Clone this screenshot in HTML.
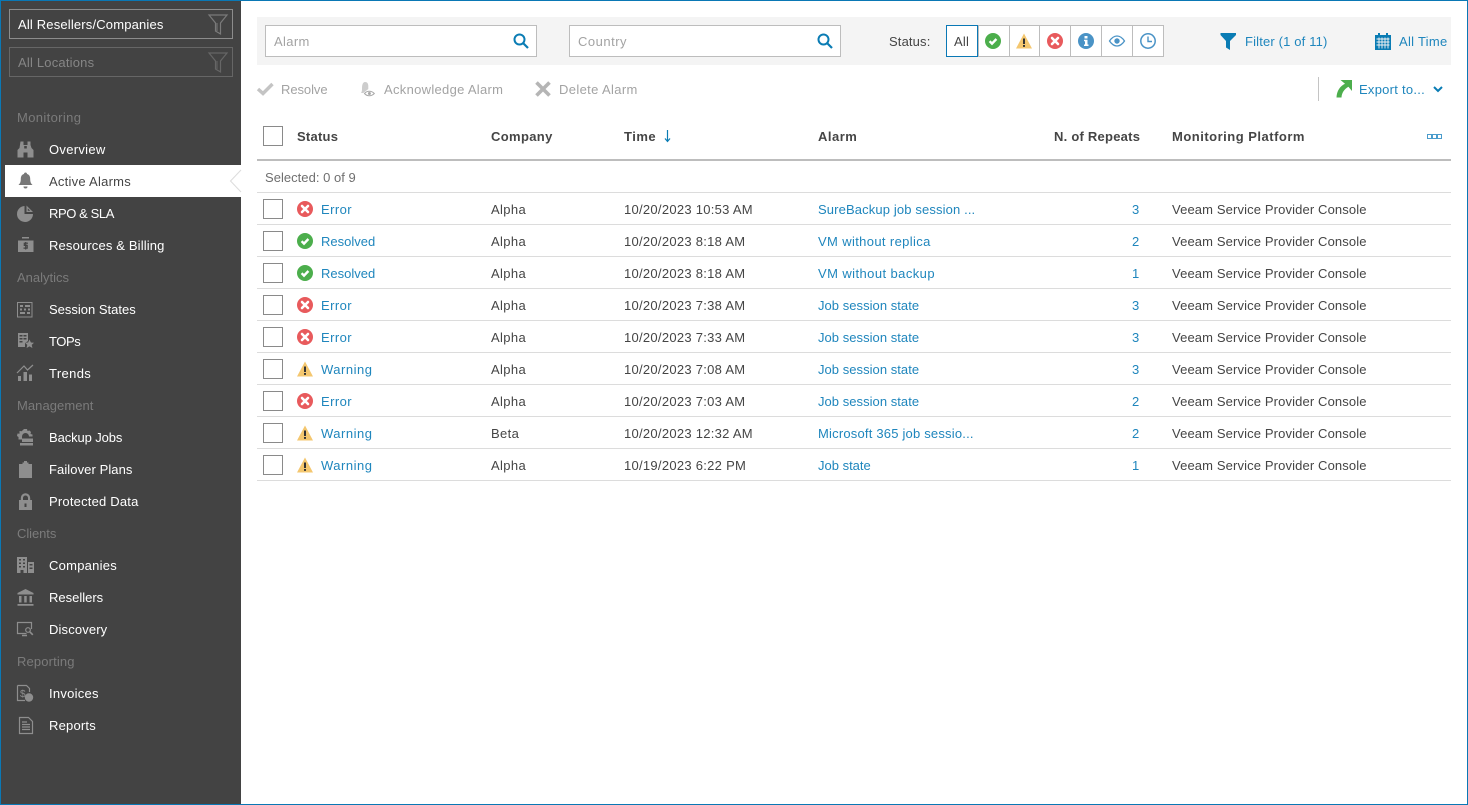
<!DOCTYPE html>
<html lang="en"><head><meta charset="utf-8"><title>Active Alarms</title>
<style>
html,body{margin:0;padding:0}
body{width:1468px;height:805px;position:relative;overflow:hidden;background:#fff;font:13px/16px "Liberation Sans",sans-serif;color:#454545;letter-spacing:.36px}
.t{position:absolute;white-space:nowrap;margin-top:1px}
.b{position:absolute;box-sizing:border-box}
svg{position:absolute;overflow:visible}
.n{color:#fff;left:49px}
.h{color:#7b7b7b;left:17px}
.l{color:#1f86bd}
.th{font-weight:bold;color:#454545;letter-spacing:.5px}
.g{color:#a3a3a3}
.cb{position:absolute;left:263px;width:20px;height:20px;box-sizing:border-box;border:1px solid #8a8a8a;background:#fff}
.ln{position:absolute;left:257px;width:1194px;height:1px;background:#dcdcdc}
.st{position:absolute;top:25px;width:32px;height:32px;box-sizing:border-box;border:1px solid #bdbdbd;background:#fff}
.v{left:1172px;letter-spacing:.13px}
.d{left:624px;letter-spacing:.28px}
.c{left:491px}
.a{left:818px}
.k{left:321px}
.r{left:1132px}
.err{letter-spacing:.42px}
.res{letter-spacing:0}
.war{letter-spacing:.5px}
.job{letter-spacing:.04px}
</style></head><body>
<svg width="0" height="0" style="position:absolute">
<defs>
<g id="err"><circle cx="8" cy="8" r="8" fill="#e85a5c"/><path d="M5 5l6 6M11 5l-6 6" stroke="#fff" stroke-width="2.6" stroke-linecap="round"/></g>
<g id="ok"><circle cx="8" cy="8" r="8" fill="#4cae4c"/><path d="M4.600 8.200l2.400 2.400 4.400-4.600" stroke="#fff" stroke-width="2.400" fill="none"/></g>
<g id="warn"><path d="M8 .5L16 15.500H0z" fill="#f4c76f"/><path d="M7 5.500h2v5.500H7zM7 12h2v1.900H7z" fill="#333"/></g>
<g id="fun"><path d="M1 1h18l-6.500 8v11l-5-3V9z" fill="none" stroke="currentColor" stroke-width="1.200"/><path d="M9 9v8" stroke="currentColor" stroke-width="1"/></g>
<g id="mag"><circle cx="6.500" cy="6.500" r="5" fill="none" stroke="#0a7cb4" stroke-width="2"/><path d="M10 10l5 5" stroke="#0a7cb4" stroke-width="2.200"/></g>
</defs>
</svg>

<!-- frame -->
<div class="b" style="left:0;top:0;width:1468px;height:805px;border:1px solid #0a78b5;z-index:9;pointer-events:none"></div>
<!-- sidebar -->
<div class="b" style="left:1px;top:1px;width:240px;height:803px;background:#434343"></div>
<div class="b" style="left:9px;top:9px;width:224px;height:30px;border:1px solid #8c8c8c"></div>
<div class="t" style="left:18px;top:16px;color:#fff;letter-spacing:.17px">All Resellers/Companies</div>
<svg style="left:208px;top:14px;color:#7a7a7a" width="20" height="20"><use href="#fun"/></svg>
<div class="b" style="left:9px;top:47px;width:224px;height:30px;border:1px solid #666"></div>
<div class="t" style="left:18px;top:54px;color:#868686;letter-spacing:.2px">All Locations</div>
<svg style="left:208px;top:52px;color:#666" width="20" height="20"><use href="#fun"/></svg>

<div class="b" style="left:5px;top:165px;width:236px;height:32px;background:#fff"></div>
<svg style="left:229px;top:169px" width="12" height="24"><path d="M12 1L1.500 12 12 23" fill="#fff" stroke="#dcdcdc" stroke-width="1"/></svg>

<div class="t h" style="top:109px">Monitoring</div>
<div class="t n" style="top:141px;letter-spacing:.3px">Overview</div>
<div class="t" style="left:49px;top:173px;color:#454545;letter-spacing:.25px">Active Alarms</div>
<div class="t n" style="top:205px;letter-spacing:-.4px">RPO &amp; SLA</div>
<div class="t n" style="top:237px;letter-spacing:.15px">Resources &amp; Billing</div>
<div class="t h" style="top:269px;letter-spacing:0">Analytics</div>
<div class="t n" style="top:301px;letter-spacing:0">Session States</div>
<div class="t n" style="top:333px;letter-spacing:-.4px">TOPs</div>
<div class="t n" style="top:365px">Trends</div>
<div class="t h" style="top:397px;letter-spacing:.06px">Management</div>
<div class="t n" style="top:429px;letter-spacing:-.1px">Backup Jobs</div>
<div class="t n" style="top:461px;letter-spacing:.08px">Failover Plans</div>
<div class="t n" style="top:493px;letter-spacing:.2px">Protected Data</div>
<div class="t h" style="top:525px;letter-spacing:-.07px">Clients</div>
<div class="t n" style="top:557px;letter-spacing:.25px">Companies</div>
<div class="t n" style="top:589px;letter-spacing:0">Resellers</div>
<div class="t n" style="top:621px;letter-spacing:.14px">Discovery</div>
<div class="t h" style="top:653px;letter-spacing:.14px">Reporting</div>
<div class="t n" style="top:685px;letter-spacing:.25px">Invoices</div>
<div class="t n" style="top:717px;letter-spacing:.2px">Reports</div>

<!-- sidebar icons -->
<svg style="left:17px;top:141px" width="17" height="17" fill="#8e8e8e"><path d="M3.500 0.500h3v3.500h4V.5h3v3.500l1 3 2 2v7.500h-6v-5H6.500v5H.5V9l2-2z"/><path d="M7.200 5h2.600v2.500H7.200z" fill="#434343"/></svg>
<svg style="left:17px;top:172px" width="17" height="17" fill="#777"><path d="M8.500 .5c1 0 1.500.7 1.500 1.500 2.500.6 3.200 2.700 3.200 5 0 3 .8 4.500 2.300 6H1.500c1.500-1.500 2.300-3 2.300-6 0-2.300.7-4.400 3.200-5 0-.8.500-1.500 1.500-1.500z"/><path d="M6.500 14.500h4a2 2 0 0 1-4 0z"/></svg>
<svg style="left:17px;top:205px" width="17" height="17" fill="#8e8e8e"><path d="M7.500 1v8h8.500A8 8 0 1 1 7.500 1z"/><path d="M9.500 .5L16 7H9.500zM10.800 3.400V5.800h2.400z" fill-rule="evenodd"/></svg>
<svg style="left:17px;top:237px" width="17" height="17" fill="#8e8e8e"><path d="M5 0h7v1.500H5zM1 3.500h15.500V15H1z"/><path d="M11 6.200H7.300v2.200H10.200v2.700H6.500M8.700 5v7.500" fill="none" stroke="#434343" stroke-width="1.200"/></svg>

<svg style="left:17px;top:302px" width="16" height="16" fill="none" stroke="#8e8e8e"><rect x=".5" y=".5" width="14.500" height="14.500"/><path d="M3 4h3M8 4h5M3 7.500h2M7 7.500h2M11 7.500h2M3 11h5M10 11h3" stroke-width="2"/></svg>
<svg style="left:17px;top:332px" width="17" height="17" fill="#8e8e8e"><path d="M1 1h10v8l-3 2v4H1zM2.500 3v1.500h3V3zm4 0v1.500h3V3zM2.500 6v1.500h3V6zm4 0v1.500h3V6zM2.500 9v1.500h3V9z" fill-rule="evenodd"/><path d="M12.500 7.500l1.400 3 3.100.3-2.300 2.100.7 3.100-2.900-1.600-2.900 1.600.7-3.100-2.300-2.100 3.100-.3z"/></svg>
<svg style="left:17px;top:364px" width="17" height="17"><path d="M0 9l7-7 3.500 4L16 1" fill="none" stroke="#8e8e8e" stroke-width="1.200"/><path d="M1 12h3v5H1zM6.500 8h3.500v9H6.500zM12 10.500h3V17h-3z" fill="#8e8e8e"/></svg>

<svg style="left:17px;top:429px" width="17" height="17" fill="#8e8e8e"><path d="M7 0h3l.5 2 2-.5 1.500 1.500-.5 2 2 .5v2H12a3.500 3.500 0 0 0-7 0v3H1.500V8L0 7l.5-2.500 2 .3L2.500 2l2.200.2z"/><path d="M5 9.500h11V13H5zM3 14h13v2.500H3z"/></svg>
<svg style="left:19px;top:461px" width="13" height="17" fill="#8e8e8e"><path d="M0 3h3.500V1.500h1.500V0h3v1.500h1.500V3H13v14H0z"/></svg>
<svg style="left:18px;top:493px" width="15" height="17" fill="#8e8e8e"><path d="M1 7h1.800V5a4.700 4.700 0 0 1 9.400 0v2H14v10H1zM5 7h5V5a2.500 2.500 0 0 0-5 0z" fill-rule="evenodd"/><rect x="6.500" y="10.500" width="2" height="3.500" fill="#434343"/></svg>

<svg style="left:17px;top:556px" width="17" height="17" fill="#8e8e8e"><path d="M0 1h10v16H6.500v-3h-3v3H0zM2 3v1.500h2V3zm4 0v1.500h2V3zM2 6.500V8h2V6.500zm4 0V8h2V6.500zM2 10v1.500h2V10zm4 0v1.500h2V10z" fill-rule="evenodd"/><path d="M11 6h6v11h-6zm1.500 2v1.500h3V8zm0 3.500V13h3v-1.500z" fill-rule="evenodd"/></svg>
<svg style="left:17px;top:589px" width="17" height="17" fill="#8e8e8e"><path d="M8.500 0L16.500 4v1.500H.5V4zM2 7h2.500v6.500H2zM7.200 7h2.500v6.500H7.200zM12.500 7H15v6.500h-2.500zM.5 15h16v1.700H.5z"/></svg>
<svg style="left:17px;top:621px" width="17" height="17" fill="none" stroke="#8e8e8e"><path d="M14.500 8V1.500H.5v11h9" stroke-width="1.200"/><path d="M5 14.500h5" stroke-width="1.500"/><circle cx="11" cy="9" r="2.300" stroke-width="1.200"/><path d="M12.800 10.800l3 3" stroke-width="1.600"/></svg>
<svg style="left:17px;top:685px" width="17" height="17"><path d="M.5.500h9l3 3V7M8 15.500H.5V.500" fill="none" stroke="#8e8e8e" stroke-width="1.200"/><text x="3" y="12" font-size="10" font-family="Liberation Sans" fill="#8e8e8e" letter-spacing="0">$</text><circle cx="12" cy="12.500" r="4.200" fill="#8e8e8e"/></svg>
<svg style="left:19px;top:717px" width="14" height="17"><path d="M.5.500h9l4 4v12H.5z" fill="none" stroke="#8e8e8e" stroke-width="1.200"/><path d="M3 5h5M3 7.500h8M3 10h8M3 12.500h8" stroke="#8e8e8e" stroke-width="1.300"/></svg>

<!-- filter bar -->
<div class="b" style="left:257px;top:17px;width:1194px;height:48px;background:#f4f4f4"></div>
<div class="b" style="left:265px;top:25px;width:272px;height:32px;background:#fff;border:1px solid #bdbdbd"></div>
<div class="t g" style="left:274px;top:33px">Alarm</div>
<svg style="left:513px;top:33px" width="16" height="16"><use href="#mag"/></svg>
<div class="b" style="left:569px;top:25px;width:272px;height:32px;background:#fff;border:1px solid #bdbdbd"></div>
<div class="t g" style="left:578px;top:33px;letter-spacing:.5px">Country</div>
<svg style="left:817px;top:33px" width="16" height="16"><use href="#mag"/></svg>
<div class="t" style="left:889px;top:33px;letter-spacing:.14px">Status:</div>
<div class="st" style="left:978px"></div><div class="st" style="left:1009px"></div><div class="st" style="left:1039px"></div><div class="st" style="left:1070px"></div><div class="st" style="left:1101px"></div><div class="st" style="left:1132px"></div>
<div class="st" style="left:946px;border-color:#0a78b5"></div>
<div class="t" style="left:954px;top:33px;letter-spacing:.2px">All</div>
<svg style="left:985px;top:33px" width="16" height="16"><use href="#ok"/></svg>
<svg style="left:1016px;top:33px" width="16" height="16"><use href="#warn"/></svg>
<svg style="left:1047px;top:33px" width="16" height="16"><use href="#err"/></svg>
<svg style="left:1078px;top:33px" width="16" height="16"><circle cx="8" cy="8" r="8" fill="#4a93c6"/><path d="M6.500 3h3v2.500h-3zM6 6.800h3.500v4.700h1v1.500H6v-1.500h1V8.300H6z" fill="#fff"/></svg>
<svg style="left:1109px;top:33px" width="16" height="16"><path d="M.5 8C3 4.300 5.500 3 8 3s5 1.300 7.500 5C13 11.700 10.500 13 8 13S3 11.700.5 8z" fill="none" stroke="#4a93c6" stroke-width="1.300"/><circle cx="8" cy="8" r="2.700" fill="#4a93c6"/></svg>
<svg style="left:1140px;top:33px" width="16" height="16" fill="none" stroke="#4a93c6"><circle cx="8" cy="8" r="7.200" stroke-width="1.500"/><path d="M8 3.500V8.500H12" stroke-width="1.400"/></svg>
<svg style="left:1220px;top:33px" width="17" height="17" fill="#0a7cb4"><path d="M.5 0h15.500v2L10 8v9l-4-2.500V8L.5 2z"/></svg>
<div class="t l" style="left:1245px;top:33px;letter-spacing:.16px">Filter (1 of 11)</div>
<svg style="left:1375px;top:33px" width="16" height="17"><path d="M0 2h3V0h2v2h6V0h2v2h3v15H0z" fill="#0a7cb4"/><path d="M1.500 6h13M1.500 9h13M1.500 12h13M4 4.500V15.500M7 4.500V15.500M10 4.500V15.500M13 4.500V15.500" stroke="#f4f4f4" stroke-width=".9"/></svg>
<div class="t l" style="left:1399px;top:33px;letter-spacing:.28px">All Time</div>

<!-- toolbar -->
<svg style="left:257px;top:82px" width="17" height="14"><path d="M1 7l5 4.500L15.500 2" fill="none" stroke="#c4c4c4" stroke-width="3.400"/></svg>
<div class="t g" style="left:281px;top:81px;letter-spacing:-.07px">Resolve</div>
<svg style="left:359px;top:81px" width="17" height="17"><path d="M6 1c2.300 0 3.300 1.700 3.300 4v3l-5 4H2c1-1.200 1-3 1-5 0-3.500 1-6 3-6z" fill="#cdcdcd"/><path d="M5.500 12.500c2.500-3 7-3 9.800 0-2.800 3-7.300 3-9.800 0z" fill="#fff" stroke="#a8a8a8"/><circle cx="10.400" cy="12.500" r="1.500" fill="#a8a8a8"/></svg>
<div class="t g" style="left:384px;top:81px;letter-spacing:.3px">Acknowledge Alarm</div>
<svg style="left:535px;top:81px" width="16" height="16"><path d="M1.500 1.500l13 13M14.500 1.500l-13 13" stroke="#b5b5b5" stroke-width="3.600"/></svg>
<div class="t g" style="left:559px;top:81px">Delete Alarm</div>
<div class="b" style="left:1318px;top:77px;width:1px;height:24px;background:#c4c4c4"></div>
<svg style="left:1336px;top:80px" width="16" height="18"><path d="M4.500 0H16v11l-3.600-4.200C8 9.500 5.800 13 5.500 17.500H.5C.7 11 4 6 9 3.700z" fill="#4cae4c"/></svg>
<div class="t l" style="left:1359px;top:81px;letter-spacing:.26px">Export to...</div>
<svg style="left:1433px;top:86px" width="10" height="7"><path d="M1 1l4 4 4-4" fill="none" stroke="#0a7cb4" stroke-width="2"/></svg>

<!-- table head -->
<div class="cb" style="top:126px"></div>
<div class="t th" style="left:297px;top:128px;letter-spacing:.25px">Status</div>
<div class="t th" style="left:491px;top:128px;letter-spacing:.35px">Company</div>
<div class="t th" style="left:624px;top:128px">Time</div>
<svg style="left:663px;top:130px" width="9" height="13"><path d="M4.500 0v11M2 8.500l2.500 3 2.500-3" fill="none" stroke="#0a7cb4" stroke-width="1.200"/></svg>
<div class="t th" style="left:818px;top:128px">Alarm</div>
<div class="t th" style="left:1054px;top:128px;letter-spacing:.24px">N. of Repeats</div>
<div class="t th" style="left:1172px;top:128px">Monitoring Platform</div>
<svg style="left:1427px;top:134px" width="16" height="5" fill="none" stroke="#4a9ccc"><rect x=".5" y=".5" width="4" height="4"/><rect x="5.500" y=".5" width="4" height="4"/><rect x="10.500" y=".5" width="4" height="4"/></svg>
<div class="b" style="left:257px;top:159px;width:1194px;height:2px;background:#bdbdbd"></div>
<div class="t" style="left:265px;top:169px;color:#6f6f6f;letter-spacing:.03px">Selected: 0 of 9</div>

<div class="ln" style="top:192px"></div><div class="ln" style="top:224px"></div><div class="ln" style="top:256px"></div><div class="ln" style="top:288px"></div><div class="ln" style="top:320px"></div><div class="ln" style="top:352px"></div><div class="ln" style="top:384px"></div><div class="ln" style="top:416px"></div><div class="ln" style="top:448px"></div><div class="ln" style="top:480px"></div>

<!-- row 1 -->
<div class="cb" style="top:199px"></div><svg style="left:297px;top:201px" width="16" height="16"><use href="#err"/></svg>
<div class="t l k err" style="top:201px">Error</div><div class="t c" style="top:201px">Alpha</div><div class="t d" style="top:201px">10/20/2023 10:53 AM</div><div class="t l a" style="top:201px;letter-spacing:.13px">SureBackup job session ...</div><div class="t l r" style="top:201px">3</div><div class="t v" style="top:201px">Veeam Service Provider Console</div>
<!-- row 2 -->
<div class="cb" style="top:231px"></div><svg style="left:297px;top:233px" width="16" height="16"><use href="#ok"/></svg>
<div class="t l k res" style="top:233px">Resolved</div><div class="t c" style="top:233px">Alpha</div><div class="t d" style="top:233px">10/20/2023 8:18 AM</div><div class="t l a" style="top:233px">VM without replica</div><div class="t l r" style="top:233px">2</div><div class="t v" style="top:233px">Veeam Service Provider Console</div>
<!-- row 3 -->
<div class="cb" style="top:263px"></div><svg style="left:297px;top:265px" width="16" height="16"><use href="#ok"/></svg>
<div class="t l k res" style="top:265px">Resolved</div><div class="t c" style="top:265px">Alpha</div><div class="t d" style="top:265px">10/20/2023 8:18 AM</div><div class="t l a" style="top:265px;letter-spacing:.42px">VM without backup</div><div class="t l r" style="top:265px">1</div><div class="t v" style="top:265px">Veeam Service Provider Console</div>
<!-- row 4 -->
<div class="cb" style="top:295px"></div><svg style="left:297px;top:297px" width="16" height="16"><use href="#err"/></svg>
<div class="t l k err" style="top:297px">Error</div><div class="t c" style="top:297px">Alpha</div><div class="t d" style="top:297px">10/20/2023 7:38 AM</div><div class="t l a job" style="top:297px">Job session state</div><div class="t l r" style="top:297px">3</div><div class="t v" style="top:297px">Veeam Service Provider Console</div>
<!-- row 5 -->
<div class="cb" style="top:327px"></div><svg style="left:297px;top:329px" width="16" height="16"><use href="#err"/></svg>
<div class="t l k err" style="top:329px">Error</div><div class="t c" style="top:329px">Alpha</div><div class="t d" style="top:329px">10/20/2023 7:33 AM</div><div class="t l a job" style="top:329px">Job session state</div><div class="t l r" style="top:329px">3</div><div class="t v" style="top:329px">Veeam Service Provider Console</div>
<!-- row 6 -->
<div class="cb" style="top:359px"></div><svg style="left:297px;top:361px" width="16" height="16"><use href="#warn"/></svg>
<div class="t l k war" style="top:361px">Warning</div><div class="t c" style="top:361px">Alpha</div><div class="t d" style="top:361px">10/20/2023 7:08 AM</div><div class="t l a job" style="top:361px">Job session state</div><div class="t l r" style="top:361px">3</div><div class="t v" style="top:361px">Veeam Service Provider Console</div>
<!-- row 7 -->
<div class="cb" style="top:391px"></div><svg style="left:297px;top:393px" width="16" height="16"><use href="#err"/></svg>
<div class="t l k err" style="top:393px">Error</div><div class="t c" style="top:393px">Alpha</div><div class="t d" style="top:393px">10/20/2023 7:03 AM</div><div class="t l a job" style="top:393px">Job session state</div><div class="t l r" style="top:393px">2</div><div class="t v" style="top:393px">Veeam Service Provider Console</div>
<!-- row 8 -->
<div class="cb" style="top:423px"></div><svg style="left:297px;top:425px" width="16" height="16"><use href="#warn"/></svg>
<div class="t l k war" style="top:425px">Warning</div><div class="t c" style="top:425px">Beta</div><div class="t d" style="top:425px">10/20/2023 12:32 AM</div><div class="t l a" style="top:425px;letter-spacing:.2px">Microsoft 365 job sessio...</div><div class="t l r" style="top:425px">2</div><div class="t v" style="top:425px">Veeam Service Provider Console</div>
<!-- row 9 -->
<div class="cb" style="top:455px"></div><svg style="left:297px;top:457px" width="16" height="16"><use href="#warn"/></svg>
<div class="t l k war" style="top:457px">Warning</div><div class="t c" style="top:457px">Alpha</div><div class="t d" style="top:457px">10/19/2023 6:22 PM</div><div class="t l a" style="top:457px;letter-spacing:0">Job state</div><div class="t l r" style="top:457px">1</div><div class="t v" style="top:457px">Veeam Service Provider Console</div>
</body></html>
